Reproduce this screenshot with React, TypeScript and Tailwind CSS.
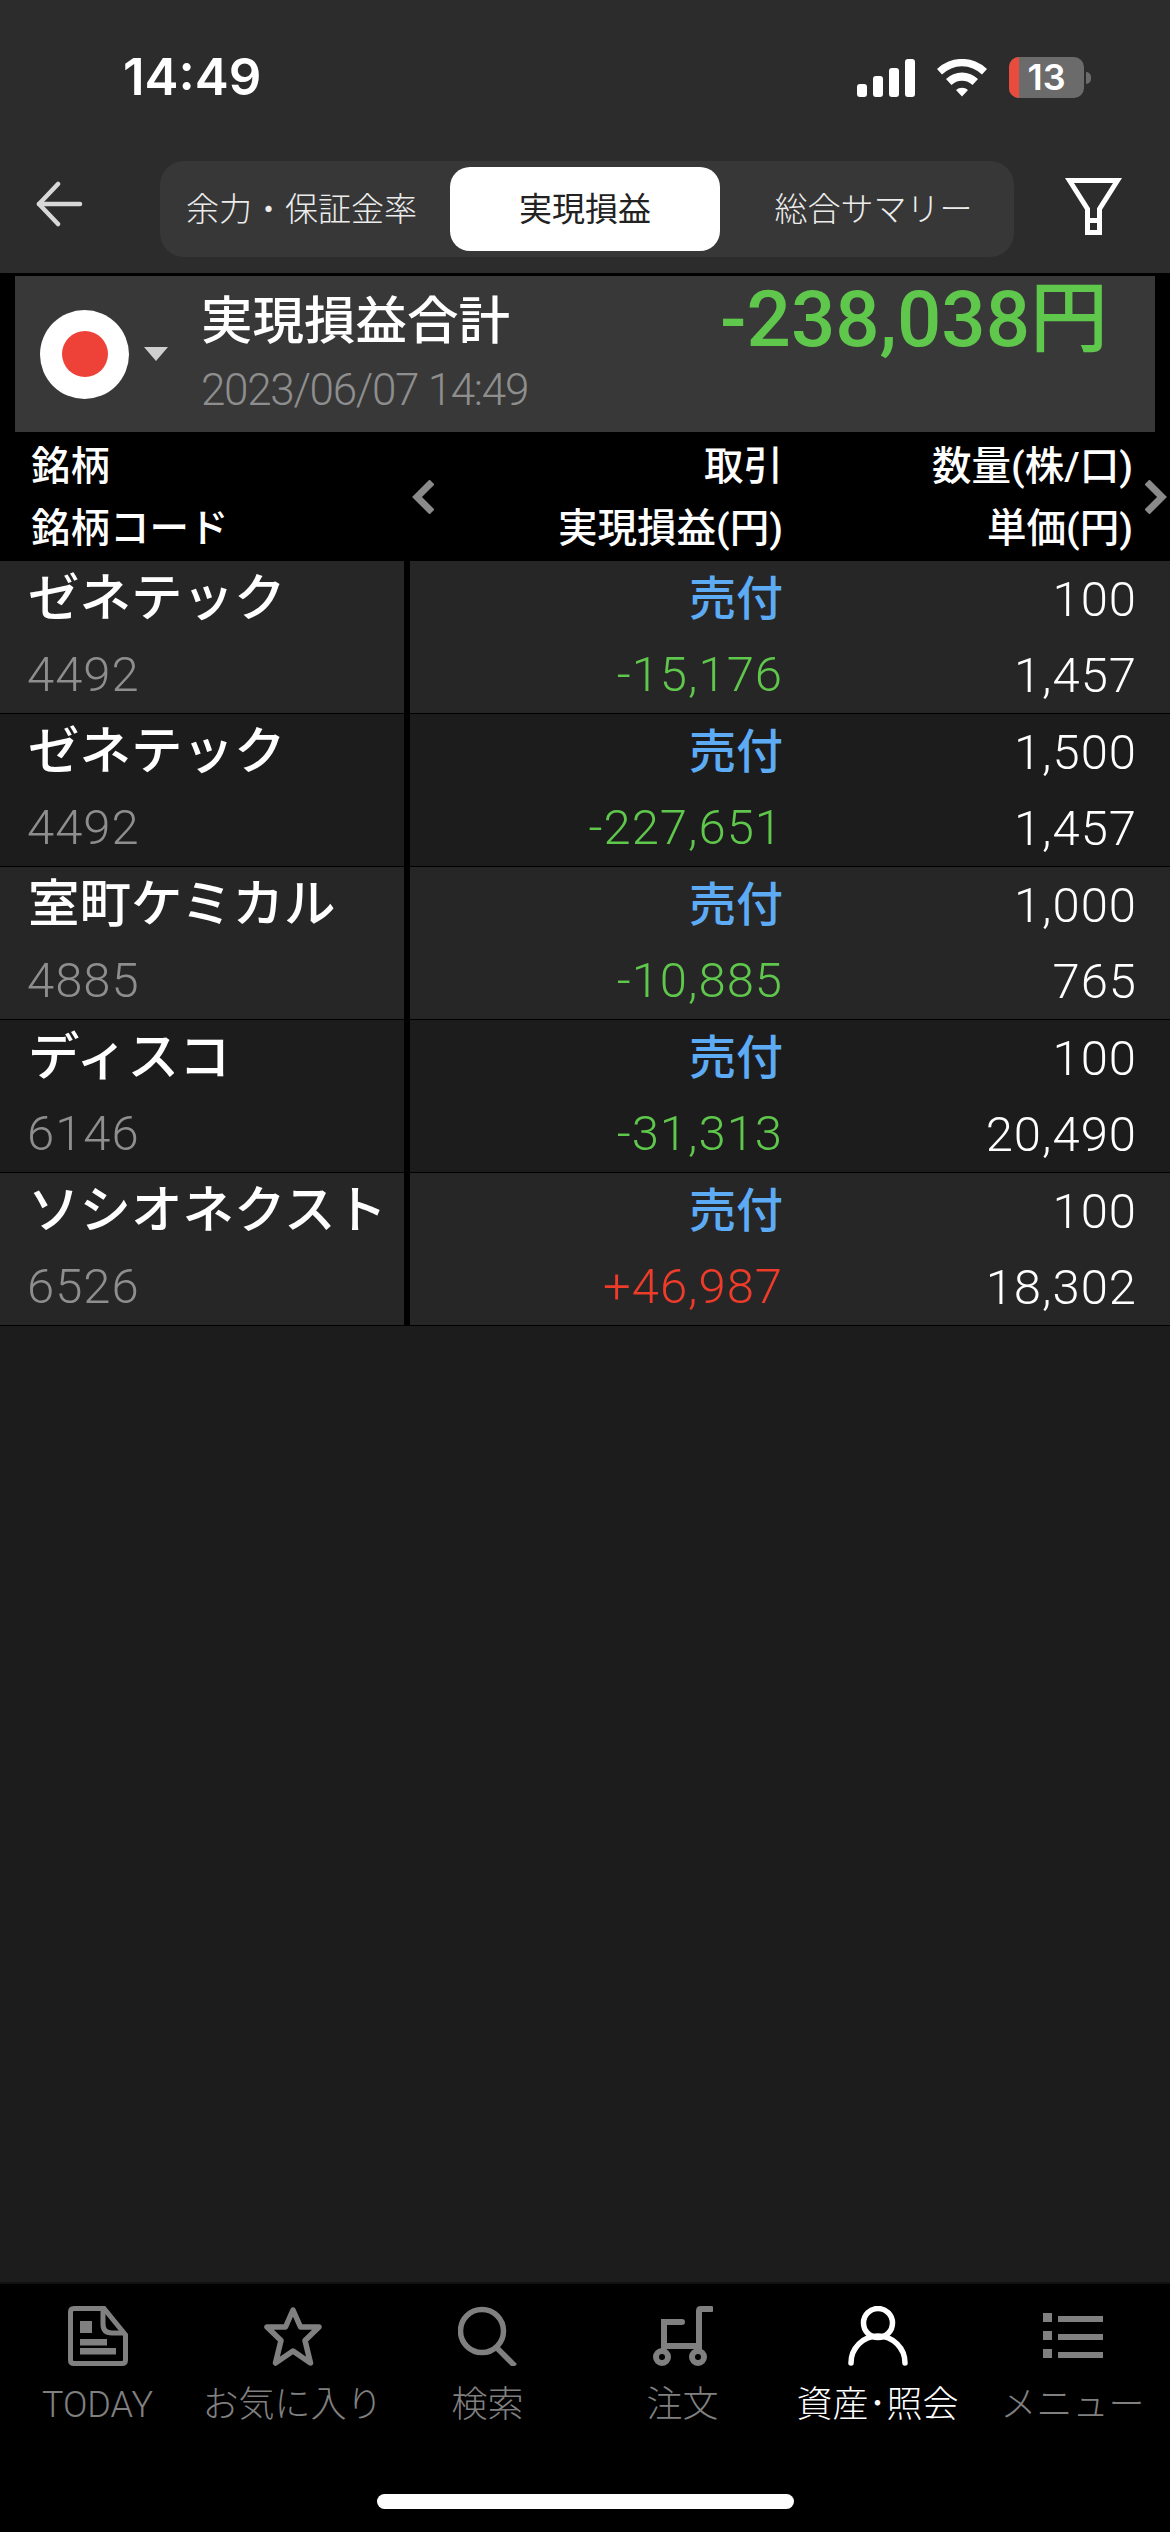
import type { ReactNode } from "react";

const jp = "font-['Roboto','Noto_Sans_CJK_JP',sans-serif]";

type Row = {
  name: string;
  code: string;
  side: string;
  pl: string;
  qty: string;
  price: string;
};

const rows: Row[] = [
  { name: "ゼネテック", code: "4492", side: "売付", pl: "-15,176", qty: "100", price: "1,457" },
  { name: "ゼネテック", code: "4492", side: "売付", pl: "-227,651", qty: "1,500", price: "1,457" },
  { name: "室町ケミカル", code: "4885", side: "売付", pl: "-10,885", qty: "1,000", price: "765" },
  { name: "ディスコ", code: "6146", side: "売付", pl: "-31,313", qty: "100", price: "20,490" },
  { name: "ソシオネクスト", code: "6526", side: "売付", pl: "+46,987", qty: "100", price: "18,302" },
];

function StatusBar() {
  return (
    <div className="h-[152px] flex items-start justify-between pl-[123px] pr-[79px] pt-[49px]">
      <span className="text-[51px] leading-[56px] font-semibold text-white font-['Inter',sans-serif]">14:49</span>
      <div className="flex items-center gap-[22px] pt-[8px]">
        <svg width="58" height="38" viewBox="0 0 58 38" fill="#fff">
          <rect x="0" y="25" width="10" height="13" rx="3" />
          <rect x="16" y="17" width="10" height="21" rx="3" />
          <rect x="32" y="9" width="10" height="29" rx="3" />
          <rect x="48" y="0" width="10" height="38" rx="3" />
        </svg>
        <svg width="50" height="38" viewBox="0 0 50 38" fill="#fff">
          <path d="M0 10 A36 36 0 0 1 50 10 L45 15.5 A28.5 28.5 0 0 0 5 15.5 Z" />
          <path d="M9 20 A23 23 0 0 1 41 20 L35.5 26 A15 15 0 0 0 14.5 26 Z" />
          <path d="M19 31 A9 9 0 0 1 31 31 L25 37.5 Z" />
        </svg>
        <div className="flex items-center gap-[2px]">
          <div className="relative w-[75px] h-[41px] rounded-[10px] bg-[#6b6b6b] flex items-center justify-center">
            <div className="absolute left-0 top-0 h-full w-[10px] rounded-l-[10px] bg-[#e94b3c]" />
            <span className="relative text-[36px] leading-[41px] font-semibold text-white font-['Inter',sans-serif]">13</span>
          </div>
          <div className="w-[5px] h-[12px] rounded-r-full bg-[#6b6b6b]" />
        </div>
      </div>
    </div>
  );
}

function NavBar() {
  return (
    <div className="h-[121px] flex items-start">
      <div className="w-[160px] pl-[35px] pt-[29px]">
        <svg width="48" height="48" viewBox="0 0 48 48" fill="none" stroke="#d8d8d8" strokeWidth="4.5" strokeLinecap="round" strokeLinejoin="round">
          <path d="M23 3 L4 23 L23 43" />
          <path d="M4 23 H45" />
        </svg>
      </div>
      <div className="w-[854px] h-[96px] mt-[9px] rounded-[24px] bg-[#373737] flex items-center p-[6px] text-[33px] leading-none">
        <div className="w-[284px] pr-[13px] text-center font-light text-[#ececec]">余力・保証金率</div>
        <div className="w-[270px] h-[84px] rounded-[20px] bg-white flex items-center justify-center text-[#222]">実現損益</div>
        <div className="flex-1 pl-[19px] text-center font-light text-[#ececec]">総合サマリー</div>
      </div>
      <div className="flex-1 pl-[51px] pt-[26px]">
        <svg width="57" height="57" viewBox="0 0 57 57" fill="none" stroke="#fff" strokeWidth="5">
          <path d="M4.5 2.5 H52.5 L34.5 31 V54.5 H22.5 V31 Z" />
          <path d="M22 42.5 H35" />
        </svg>
      </div>
    </div>
  );
}

function Summary() {
  return (
    <div className="bg-black pt-[3px] pl-[15px] pr-[15px]">
      <div className="h-[156px] bg-[#383838] relative flex">
        <div className="w-[186px] flex items-center pl-[25px]">
          <div className="w-[89px] h-[89px] rounded-full bg-white flex items-center justify-center shrink-0">
            <div className="w-[46px] h-[46px] rounded-full bg-[#ee4138]" />
          </div>
          <div className="ml-[15px] w-0 h-0 border-x-[12px] border-x-transparent border-t-[14px] border-t-[#cfcfcf]" />
        </div>
        <div className="flex flex-col">
          <span className="text-[51.5px] leading-[60px] font-medium text-white mt-[16px]">実現損益合計</span>
          <span className="text-[44px] leading-[52px] font-light tracking-[-1.3px] text-[#8e8e8e] mt-[12px]">2023/06/07 14:49</span>
        </div>
        <div className="absolute right-[47px] top-[0px] text-[78px] leading-[88px] font-medium text-[#5fc74c]">-238,038円</div>
      </div>
    </div>
  );
}

function ColHead({ children }: { children: ReactNode }) {
  return <div className="h-[62px] flex items-center text-[39.5px] leading-none font-medium text-white whitespace-nowrap">{children}</div>;
}

function TableHeader() {
  return (
    <div className="h-[129px] bg-black flex items-center">
      <div className="w-[412px] pl-[31px] flex flex-col pt-[3px]">
        <ColHead>銘柄</ColHead>
        <ColHead>銘柄コード</ColHead>
      </div>
      <svg width="22" height="34" viewBox="0 0 22 34" fill="none" stroke="#8a8a8a" strokeWidth="7" className="shrink-0">
        <path d="M20 2 L5 17 L20 32" />
      </svg>
      <div className="w-[349px] flex flex-col items-end pt-[3px]">
        <ColHead>取引</ColHead>
        <ColHead>実現損益(円)</ColHead>
      </div>
      <div className="w-[350px] flex flex-col items-end pt-[3px]">
        <ColHead>数量(株/口)</ColHead>
        <ColHead>単価(円)</ColHead>
      </div>
      <svg width="22" height="34" viewBox="0 0 22 34" fill="none" stroke="#8a8a8a" strokeWidth="7" className="shrink-0 ml-[12px]">
        <path d="M2 2 L17 17 L2 32" />
      </svg>
    </div>
  );
}

function DataRow({ row, even }: { row: Row; even: boolean }) {
  const bg = even ? "bg-[#262626]" : "bg-[#1c1c1c]";
  const plColor = row.pl.startsWith("+") ? "text-[#ee3b2a]" : "text-[#5fc74c]";
  return (
    <div className="h-[153px] flex border-b border-black">
      <div className={`w-[404px] ${bg} pl-[28px] flex flex-col`}>
        <span className="h-[76px] flex items-center text-[51.5px] leading-none font-medium text-white whitespace-nowrap">{row.name}</span>
        <span className="h-[78px] -ml-[1px] flex items-center text-[49px] leading-none font-light tracking-[1px] text-[#8e8e8e]">{row.code}</span>
      </div>
      <div className="w-[6px] bg-black" />
      <div className={`flex-1 ${bg} flex`}>
        <div className="w-[373px] flex flex-col items-end">
          <span className="h-[76px] flex items-center text-[47px] leading-none font-medium text-[#5dabf4]">{row.side}</span>
          <span className={`h-[79px] flex items-center text-[49px] leading-none font-light tracking-[1px] ${plColor}`}>{row.pl}</span>
        </div>
        <div className="w-[354px] flex flex-col items-end">
          <span className="h-[78px] flex items-center text-[49px] leading-none font-light tracking-[1px] text-white">{row.qty}</span>
          <span className="h-[77px] flex items-center text-[49px] leading-none font-light tracking-[1px] text-white">{row.price}</span>
        </div>
      </div>
    </div>
  );
}

function TodayIcon() {
  return (
    <svg width="60" height="60" viewBox="0 0 60 60" fill="none">
      <path d="M2.5 6 Q2.5 2.5 6 2.5 H36 L57.5 29 V54 Q57.5 57.5 54 57.5 H6 Q2.5 57.5 2.5 54 Z" stroke="#808080" strokeWidth="5" />
      <path d="M35 3 V18 Q35 27 44 27 H56" stroke="#808080" strokeWidth="5" />
      <rect x="12" y="15" width="12" height="12" fill="#808080" />
      <rect x="12" y="33" width="27" height="6.5" fill="#808080" />
      <rect x="12" y="42" width="36" height="6.5" fill="#808080" />
    </svg>
  );
}

function StarIcon() {
  return (
    <svg width="60" height="60" viewBox="0 0 60 60" fill="none" stroke="#808080" strokeWidth="5.5" strokeLinejoin="round">
      <path d="M30 4 L37.5 21 H56 L42 34.5 L47.5 57 L30 45 L12.5 57 L18 34.5 L4 21 H22.5 Z" />
    </svg>
  );
}

function SearchIcon() {
  return (
    <svg width="60" height="60" viewBox="0 0 60 60" fill="none" stroke="#808080" strokeWidth="5.5">
      <circle cx="24" cy="25" r="21.5" />
      <path d="M39 42 L57 60" />
    </svg>
  );
}

function OrderIcon() {
  return (
    <svg width="60" height="60" viewBox="0 0 60 60" fill="none" stroke="#808080" strokeWidth="6" strokeLinecap="round">
      <path d="M29 16 H11 V42" />
      <path d="M58 3 H48 Q46 3 46 5 V42" />
      <path d="M9 40 H46" strokeLinecap="butt" />
      <circle cx="9" cy="51" r="6" />
      <circle cx="45" cy="51" r="6" />
    </svg>
  );
}

function PersonIcon() {
  return (
    <svg width="60" height="60" viewBox="0 0 60 60" fill="none" stroke="#fff" strokeWidth="5.5" strokeLinecap="round">
      <circle cx="30" cy="17" r="14.5" />
      <path d="M3 57 A27 27 0 0 1 57 57" />
    </svg>
  );
}

function MenuIcon() {
  return (
    <svg width="60" height="60" viewBox="0 0 60 60" fill="#808080">
      <rect x="0" y="7" width="9" height="9" />
      <rect x="15" y="10" width="45" height="6" />
      <rect x="0" y="25" width="9" height="9" />
      <rect x="15" y="28" width="45" height="6" />
      <rect x="0" y="43" width="9" height="9" />
      <rect x="15" y="46" width="45" height="6" />
    </svg>
  );
}

const tabs = [
  { label: "TODAY", icon: <TodayIcon />, on: false },
  { label: "お気に入り", icon: <StarIcon />, on: false },
  { label: "検索", icon: <SearchIcon />, on: false },
  { label: "注文", icon: <OrderIcon />, on: false },
  { label: "資産･照会", icon: <PersonIcon />, on: true },
  { label: "メニュー", icon: <MenuIcon />, on: false },
];

function TabBar() {
  return (
    <div className="h-[250px] bg-black border-t-[2px] border-[#111] relative">
      <div className="grid grid-cols-6 pt-[22px]">
        {tabs.map((t) => (
          <div key={t.label} className="flex flex-col items-center">
            {t.icon}
            <span className={`mt-[19px] text-[36px] leading-[40px] whitespace-nowrap font-light ${t.on ? "text-white" : "text-[#808080]"}`}>{t.label}</span>
          </div>
        ))}
      </div>
      <div className="absolute left-[377px] bottom-[23px] w-[417px] h-[15px] rounded-full bg-white" />
    </div>
  );
}

export default function App() {
  return (
    <div className={`w-[1170px] h-[2532px] bg-[#1c1c1c] flex flex-col overflow-hidden ${jp}`}>
      <div className="bg-[#2c2c2c]">
        <StatusBar />
        <NavBar />
      </div>
      <Summary />
      <TableHeader />
      <div className="flex-1">
        {rows.map((r, i) => (
          <DataRow key={i} row={r} even={i % 2 === 0} />
        ))}
      </div>
      <TabBar />
    </div>
  );
}
